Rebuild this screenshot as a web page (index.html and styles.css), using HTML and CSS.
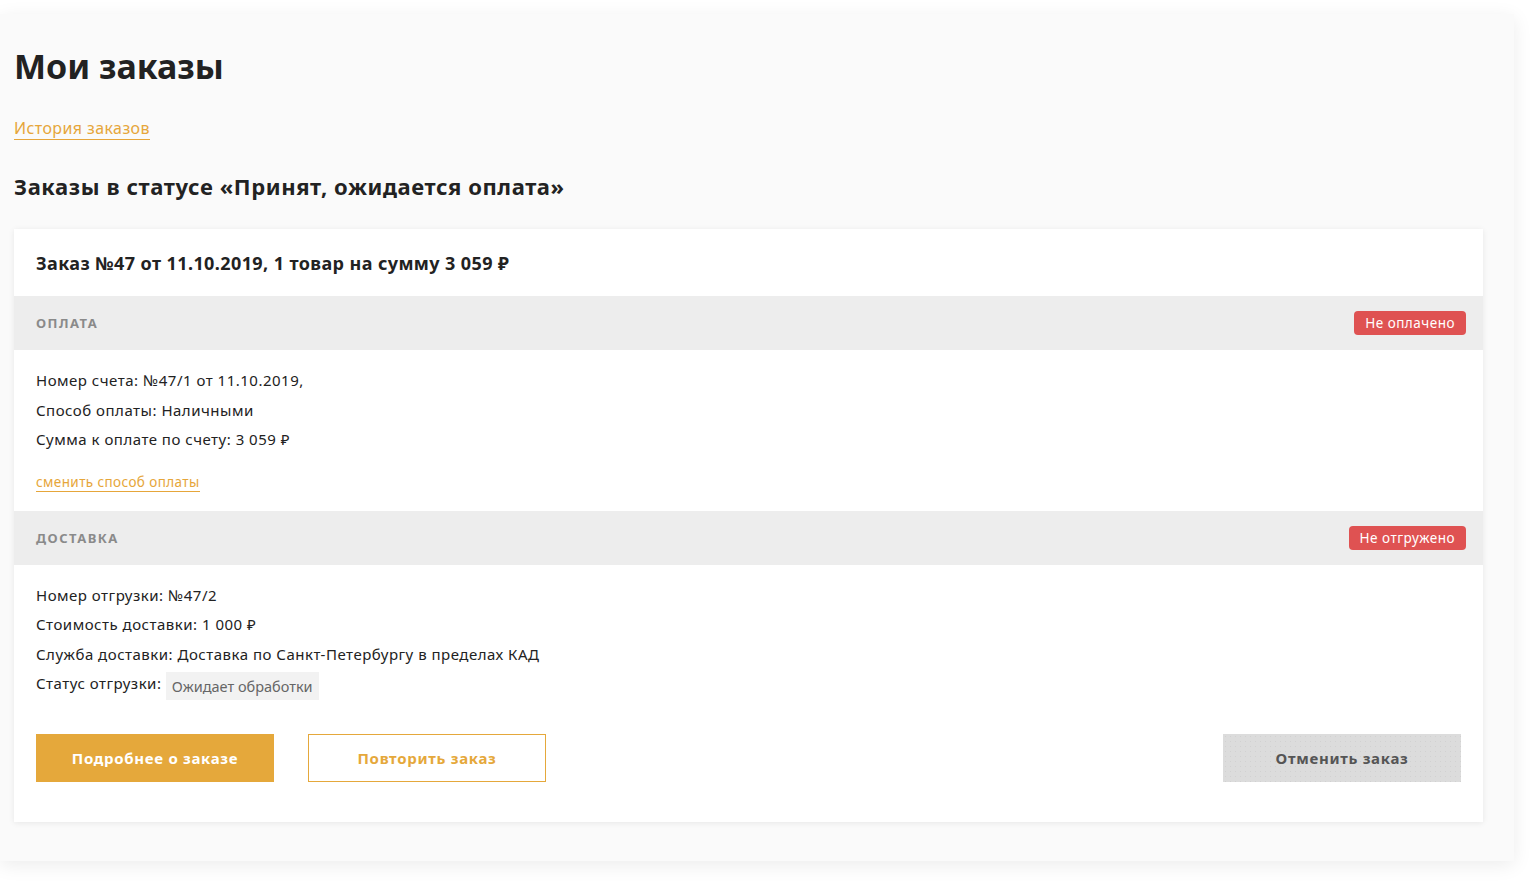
FILE: index.html
```html
<!DOCTYPE html>
<html lang="ru">
<head>
<meta charset="utf-8">
<title>Мои заказы</title>
<link rel="stylesheet" href="styles.css">
</head>
<body>
<div class="page">
  <h1 class="title">Мои заказы</h1>
  <a class="history" href="#">История заказов</a>
  <h2 class="subtitle">Заказы в статусе «Принят, ожидается оплата»</h2>
  <div class="card">
    <div class="card-head">Заказ №47 от 11.10.2019, 1 товар на сумму 3 059 ₽</div>
    <div class="sec-head"><span class="sec-title">Оплата</span><span class="badge">Не оплачено</span></div>
    <div class="sec-body sec-pay">
      <p class="line">Номер счета: №47/1 от 11.10.2019,</p>
      <p class="line">Способ оплаты: Наличными</p>
      <p class="line">Сумма к оплате по счету: 3 059 ₽</p>
      <a class="change" href="#">сменить способ оплаты</a>
    </div>
    <div class="sec-head"><span class="sec-title">Доставка</span><span class="badge">Не отгружено</span></div>
    <div class="sec-body">
      <p class="line">Номер отгрузки: №47/2</p>
      <p class="line">Стоимость доставки: 1 000 ₽</p>
      <p class="line">Служба доставки: Доставка по Санкт-Петербургу в пределах КАД</p>
      <p class="line">Статус отгрузки: <span class="status">Ожидает обработки</span></p>
      <div class="actions">
        <a class="btn btn-primary" href="#">Подробнее о заказе</a>
        <a class="btn btn-outline" href="#">Повторить заказ</a>
        <a class="btn btn-cancel" href="#">Отменить заказ</a>
      </div>
    </div>
  </div>
</div>
</body>
</html>
```
FILE: styles.css
```css
html, body {
  margin: 0;
  padding: 0;
  background: #ffffff;
}
body {
  font-family: "Noto Sans", "Open Sans", sans-serif;
  color: #222222;
  height: 888px;
  overflow: hidden;
}
.page {
  width: 1514px;
  box-sizing: border-box;
  margin-top: 14px;
  padding: 28px 31px 39px 14px;
  background: #fafafa;
  box-shadow: 0 4px 18px rgba(0, 0, 0, 0.08);
  display: flex;
  flex-direction: column;
  align-items: flex-start;
}
.title {
  margin: 0;
  font-size: 34px;
  line-height: 48px;
  font-weight: 700;
  color: #222222;
}
.history {
  margin-top: 27px;
  font-size: 16px;
  line-height: 22px;
  letter-spacing: 0.4px;
  color: #e6a63a;
  text-decoration: none;
  border-bottom: 1px solid #e6a63a;
}
.subtitle {
  margin: 31px 0 0;
  font-size: 22px;
  line-height: 30px;
  font-weight: 700;
  letter-spacing: 0.6px;
  color: #222222;
}
.card {
  margin-top: 28px;
  width: 100%;
  background: #ffffff;
  box-shadow: 0 1px 6px rgba(0, 0, 0, 0.08);
  padding-bottom: 26px;
}
.card-head {
  height: 67px;
  display: flex;
  align-items: center;
  padding: 0 22px;
  font-size: 18px;
  font-weight: 700;
  letter-spacing: 0.4px;
  color: #222222;
}
.sec-head {
  height: 54px;
  background: #ededed;
  display: flex;
  align-items: center;
  justify-content: space-between;
  padding: 0 17px 0 22px;
}
.sec-title {
  font-size: 13px;
  font-weight: 700;
  text-transform: uppercase;
  letter-spacing: 1.5px;
  color: #8a8a8a;
}
.badge {
  background: #df5252;
  color: #ffffff;
  font-size: 13.5px;
  line-height: 24px;
  letter-spacing: 0.5px;
  padding: 0 11px;
  border-radius: 4px;
}
.sec-body {
  padding: 16px 22px 14px;
}
.sec-pay {
  padding-bottom: 19px;
}
.line {
  margin: 0;
  font-size: 15px;
  line-height: 29.5px;
  letter-spacing: 0.5px;
  color: #222222;
}
.change {
  display: inline-block;
  margin-top: 18px;
  font-size: 13.5px;
  line-height: 18px;
  letter-spacing: 0.4px;
  color: #e6a63a;
  text-decoration: none;
  border-bottom: 1px solid #e6a63a;
}
.status {
  display: inline-block;
  background: #f2f2f2;
  color: #666666;
  font-size: 14.5px;
  letter-spacing: 0;
  padding: 0 6px;
  line-height: 28px;
  vertical-align: -3px;
}
.actions {
  display: flex;
  gap: 34px;
  margin-top: 34px;
}
.btn {
  width: 238px;
  height: 48px;
  box-sizing: border-box;
  display: flex;
  align-items: center;
  justify-content: center;
  font-size: 15px;
  font-weight: 700;
  letter-spacing: 0.7px;
  text-decoration: none;
}
.btn-primary {
  background: #e5a83b;
  color: #ffffff;
}
.btn-outline {
  border: 1px solid #e5a83b;
  color: #e5a83b;
  background: #ffffff;
}
.btn-cancel {
  margin-left: auto;
  background-color: #dcdcdc;
  background-image: radial-gradient(rgba(0, 0, 0, 0.05) 0.7px, transparent 1px);
  background-size: 5px 5px;
  color: #555555;
}
```
